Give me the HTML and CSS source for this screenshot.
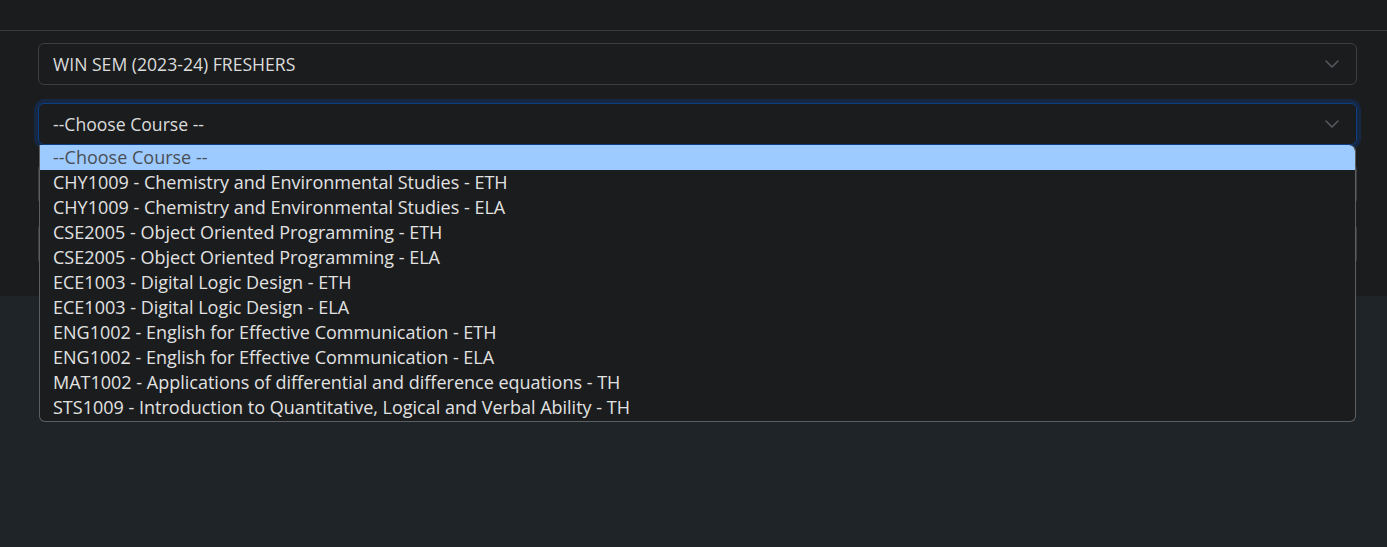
FILE: index.html
```html
<!DOCTYPE html>
<html lang="en">
<head>
<meta charset="utf-8">
<title>Course selection</title>
<link rel="stylesheet" href="styles.css">
</head>
<body>
<header class="topbar"></header>
<section class="panel">
  <div class="field">
    <div class="select">
      <span class="select-value">WIN SEM (2023-24) FRESHERS</span>
      <svg class="chev" width="14" height="8" viewBox="0 0 14 8"><path d="M1 1l6 6 6-6" fill="none" stroke="currentColor" stroke-width="1.6" stroke-linecap="round" stroke-linejoin="round"/></svg>
    </div>
  </div>
  <div class="field open">
    <div class="select focused">
      <span class="select-value">--Choose Course --</span>
      <svg class="chev" width="14" height="8" viewBox="0 0 14 8"><path d="M1 1l6 6 6-6" fill="none" stroke="currentColor" stroke-width="1.6" stroke-linecap="round" stroke-linejoin="round"/></svg>
    </div>
    <ul class="menu">
      <li class="opt active">--Choose Course --</li>
      <li class="opt">CHY1009 - Chemistry and Environmental Studies - ETH</li>
      <li class="opt">CHY1009 - Chemistry and Environmental Studies - ELA</li>
      <li class="opt">CSE2005 - Object Oriented Programming - ETH</li>
      <li class="opt">CSE2005 - Object Oriented Programming - ELA</li>
      <li class="opt">ECE1003 - Digital Logic Design - ETH</li>
      <li class="opt">ECE1003 - Digital Logic Design - ELA</li>
      <li class="opt">ENG1002 - English for Effective Communication - ETH</li>
      <li class="opt">ENG1002 - English for Effective Communication - ELA</li>
      <li class="opt">MAT1002 - Applications of differential and difference equations - TH</li>
      <li class="opt">STS1009 - Introduction to Quantitative, Logical and Verbal Ability - TH</li>
    </ul>
  </div>
  <div class="hidden-row"></div>
  <div class="hidden-row"></div>
</section>
</body>
</html>
```
FILE: styles.css
```css
* { box-sizing: border-box; }
html, body { margin: 0; padding: 0; }
body {
  width: 1387px;
  height: 547px;
  overflow: hidden;
  background: #1e2427;
  font-family: "Open Sans", "Noto Sans", sans-serif;
  color: #dee2e6;
}
.topbar {
  height: 31px;
  background: #1b1c1e;
  border-bottom: 1px solid #38393b;
}
.panel {
  background: #1b1c1e;
  height: 265px;
  padding: 12px 30px 0 38px;
  display: flex;
  flex-direction: column;
  gap: 18px;
}
.field { position: relative; }
.select {
  height: 42px;
  border: 1px solid #3c3e41;
  border-radius: 6px;
  background: #1b1c1e;
  display: flex;
  align-items: center;
  justify-content: space-between;
  padding: 0 17px 0 14px;
  font-size: 17.6px;
  color: #dcdcdc;
}
.select.focused {
  border-color: #0c3e86;
  box-shadow: 0 0 0 4px rgba(13, 60, 140, 0.35);
}
.chev { color: #55585c; }
.menu {
  position: absolute;
  top: 42px;
  left: 1px;
  right: 1px;
  margin: 0;
  padding: 0 0 1px;
  list-style: none;
  background: #1b1c1e;
  border: 1px solid #5d5e60;
  border-top: none;
  border-radius: 0 6px 6px 6px;
  z-index: 10;
  overflow: hidden;
}
.opt {
  height: 25px;
  line-height: 25px;
  padding-left: 13px;
  font-size: 18px;
  color: #e2e2e2;
  white-space: nowrap;
}
.opt.active {
  background: #9ecbff;
  color: #4a4e55;
  border-radius: 0 6px 0 0;
}
.hidden-row {
  height: 42px;
  border: 1px solid #3c3e41;
  border-radius: 6px;
}
```
